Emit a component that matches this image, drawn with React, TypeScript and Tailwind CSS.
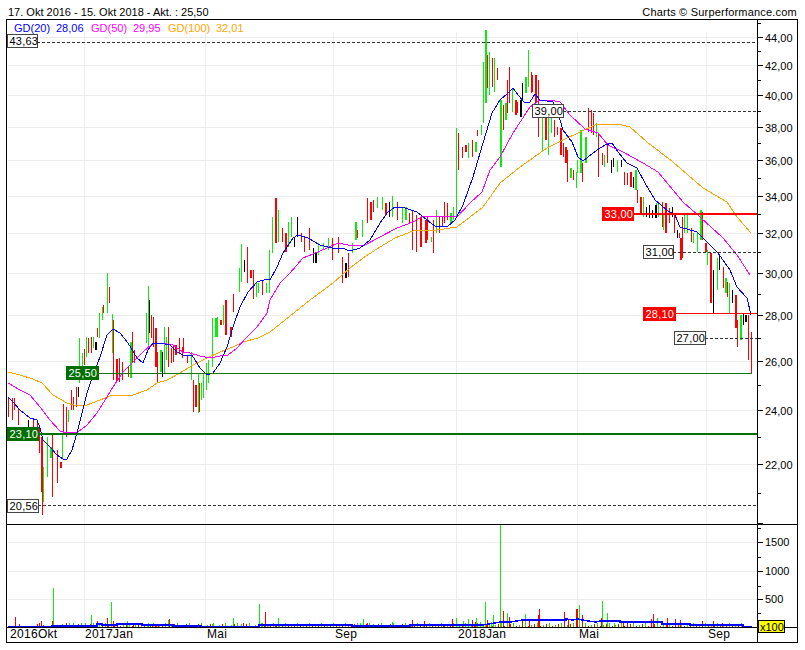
const G = [
	[43,467,502],[47,437,477],[50,447,458],[62,433,458],[68,410,422],[79,338,383],[82,353,367],[86,337,357],[93,337,348],[99,313,338],[102,307,320],[107,273,313],[112,314,353],[130,342,378],[146,313,343],[148,286,347],[160,350,372],[164,327,373],[166,337,360],[191,352,380],[198,373,413],[201,383,400],[203,373,398],[206,363,390],[208,360,383],[212,318,367],[215,318,337],[217,317,337],[223,305,325],[239,268,292],[241,244,282],[256,283,297],[258,283,293],[266,283,293],[269,250,293],
	[272,217,253],[278,210,242],[288,222,247],[291,217,237],[318,243,255],[323,243,250],[328,238,250],[352,243,253],[355,222,240],[362,220,237],[377,197,208],[382,197,210],[392,196,217],[402,208,223],[405,207,220],[431,237,242],[436,210,233],[450,213,223],[453,207,220],[456,128,217],[468,143,158],[475,142,152],[481,125,135],[483,62,123],[485,30,103],[489,52,95],[494,58,92],[500,100,167],[505,103,120],[512,88,112],[525,77,93],[528,50,87],
	[542,117,152],[548,117,155],[551,117,133],[570,168,178],[576,172,188],[577,160,173],[580,130,173],[585,137,163],[596,123,137],[604,155,167],[617,160,172],[635,170,190],[643,197,217],[656,203,213],[658,202,217],[663,213,230],[684,213,233],[687,213,233],[693,233,243],[697,233,252],[700,210,240],[707,250,265],[717,258,290],[725,278,293],[729,283,313],[740,315,340],
];
const R = [
	[8,397,417],[12,398,420],[14,398,410],[18,408,425],[33,420,432],[37,420,437],[39,427,453],[41,437,492],[42,437,515],[52,435,497],[57,450,483],[60,462,468],[63,404,433],[66,407,437],[71,390,410],[73,397,410],[76,387,407],[84,349,365],[88,338,353],[91,337,353],[97,328,337],[103,305,313],[109,287,303],[113,320,380],[116,359,382],[117,359,381],[119,358,382],[122,362,380],[128,366,377],[132,332,363],[134,350,363],[151,315,338],[153,317,347],[155,328,367],[157,352,382],[168,327,367],[171,348,363],[173,345,362],[175,345,355],[179,338,353],[182,347,358],[183,338,352],[187,355,363],[193,380,412],[195,385,407],[199,383,412],[220,320,325],[225,300,335],[230,327,337],[233,294,312],[247,247,283],[250,270,278],[253,270,299],[262,280,295],
	[275,198,243],[282,228,242],[285,233,252],[301,233,242],[304,237,252],[309,228,250],[332,238,260],[338,237,253],[342,257,283],[348,253,277],[357,230,238],[367,198,223],[370,202,220],[373,200,212],[385,203,215],[397,202,220],[409,213,223],[412,210,250],[416,215,252],[420,217,247],[425,220,243],[427,217,240],[433,220,253],[439,217,233],[442,217,227],[444,202,223],[447,203,220],[458,133,170],[462,147,158],[465,145,152],[472,140,157],[477,130,136],[487,55,88],[492,58,87],[497,68,80],[503,105,130],[507,80,113],[509,67,103],[515,100,115],[517,102,113],[532,75,92],[535,75,103],[538,80,137],
	[531,72,93],[545,117,140],[554,120,137],[557,127,135],[560,128,155],[563,143,157],[565,147,163],[567,150,182],[573,170,180],[582,163,182],[588,108,132],[591,110,133],[593,113,135],[598,133,177],[602,153,165],[607,143,163],[624,172,185],[627,173,185],[630,172,187],[637,190,203],[640,197,213],[662,202,227],[665,203,233],[669,208,223],[674,213,233],[679,233,238],[680,238,260],[682,217,258],[691,228,242],[702,212,240],[705,243,252],[710,253,303],[723,267,288],[727,282,297],[735,295,328],[737,320,347],[748,315,360],[751,332,373],
];
const K = [
	[28,420,427],[78,387,397],[95,342,350],[149,300,333],[162,352,377],[244,260,272],
	[294,237,247],[297,217,237],[313,248,263],[315,253,263],[345,263,278],[389,202,217],[520,100,117],[522,83,100],
	[611,160,173],[613,158,167],[621,160,167],[633,177,188],[646,207,217],[649,205,218],[652,210,218],[655,205,218],[672,207,217],[677,230,238],[713,270,313],[719,255,270],[732,290,303],[743,313,325],[745,315,322],
];

const BLUE = "8,397 13,402 20,410 30,418 37,420 40,428 43,440 50,447 57,455 63,459 67,459 72,450 77,433 82,413 87,393 93,375 100,357 107,335 113,329 120,333 128,343 137,358 143,363 148,350 153,343 160,343 170,345 177,352 183,355 192,355 200,368 207,375 213,373 220,363 227,347 233,327 240,307 248,292 257,282 267,279 270,280 277,267 283,253 293,238 298,235 308,238 320,245 332,248 342,248 350,251 360,248 370,240 380,223 388,212 395,207 405,208 417,212 427,220 435,226 447,227 455,220 463,205 473,177 483,143 492,113 500,100 508,93 513,88 518,95 525,103 530,102 535,94 540,100 553,102 558,113 563,130 572,142 578,157 583,161 588,157 597,150 605,145 612,143 618,152 627,163 637,168 645,183 655,200 668,211 675,215 680,227 697,232 707,242 718,253 730,270 737,287 747,298 751,315";
const MAGENTA = "8,383 20,390 30,395 40,407 50,420 60,431 67,433 78,432 87,425 97,413 107,397 113,387 123,372 133,362 143,352 152,344 160,343 173,345 183,352 190,353 200,356 210,358 220,356 228,355 237,348 247,337 257,327 267,313 270,300 280,283 290,273 303,258 313,254 327,248 338,243 353,246 365,245 380,237 397,228 413,222 423,216 440,216 457,217 470,203 482,192 490,170 500,157 513,133 530,107 540,100 550,100 560,102 570,115 585,129 598,133 608,145 623,152 643,163 658,172 673,190 683,202 700,217 723,238 737,255 750,275";
const ORANGE = "8,372 20,375 33,379 42,383 53,395 67,403 77,406 87,405 100,400 113,395 133,395 147,390 157,383 167,380 180,373 193,365 207,358 220,352 233,347 243,342 258,338 270,332 310,300 333,283 350,268 363,258 380,247 395,238 413,231 437,230 457,227 483,207 500,183 520,167 530,160 547,148 563,140 580,132 597,124 618,124 630,127 647,142 673,162 703,188 727,202 737,217 751,233";
const VOL_AVG = "8,627 52,627 52,626 97,626 97,624 102,624 102,625 117,625 117,624 142,624 142,625 173,625 173,626 201,626 201,627 259,627 259,625 352,625 352,626 410,626 410,625 483,625 500,622 510,622 523,620 566,620 566,619 573,620 577,619 588,621 596,622 600,621 620,621 620,622 662,622 662,624 690,624 690,625 743,625 743,627 752,627";

const VOL_G = [[53,588],[62,624],[73,623],[85,623],[91,615],[111,602],[127,621],[148,623],[168,620],[212,624],[233,618],[241,624],[259,604],[262,623],[268,624],[278,618],[360,623],[363,619],[373,624],[392,622],[456,618],[463,621],[468,619],[476,618],[480,622],[485,602],[491,622],[493,615],[500,525],[507,613],[525,614],[579,605],[602,601],[607,613],[614,623],[657,618]];
const VOL_R = [[15,617],[19,624],[37,624],[39,623],[41,621],[43,625],[52,621],[66,623],[97,621],[107,618],[113,621],[117,624],[133,623],[152,624],[155,624],[158,624],[169,619],[243,623],[265,612],[275,624],[282,624],[288,624],[294,624],[367,623],[412,620],[424,621],[443,624],[452,619],[472,620],[475,622],[487,620],[503,611],[509,617],[522,619],[529,620],[539,609],[538,615],[564,612],[568,620],[576,609],[577,609],[582,615],[601,618],[623,623],[627,623],[651,619],[653,614],[667,618],[675,619],[680,620],[702,621],[713,621],[722,623]];

const PRICE_TICKS = [45,44,43,42,41,40,39,38,37,36,35,34,33,32,31,30,29,28,27,26,25,24,23,22,21,20];
const priceY = (p: number) => Math.round(36.5 + 616.7 * Math.log(44 / p)) + 0.5;
const GRID_X = [84.5, 205.5, 333.5, 456.5, 577.5, 706.5];
const DATES: [number, string][] = [[10,"2016Okt"],[85,"2017Jan"],[207,"Mai"],[335,"Sep"],[458,"2018Jan"],[579,"Mai"],[708,"Sep"]];

function Bars({ data, color }: { data: number[][]; color: string }) {
	return (
		<>
			{data.map(([x, a, b], i) => (
				<rect key={i} x={x} y={a} width={x % 5 === 0 ? 2 : 1} height={b - a} fill={color} />
			))}
		</>
	);
}

function Tag({ x, y, w, text, fill }: { x: number; y: number; w: number; text: string; fill?: string }) {
	return (
		<g>
			<rect x={x + 0.5} y={y + 0.5} width={w} height={13} fill={fill ?? "#fff"} stroke={fill ?? "#444"} shapeRendering="crispEdges" />
			<text x={x + 2.5} y={y + 11} fontSize={11} letterSpacing={0.2} fill={fill ? "#fff" : "#000"}>
				{text}
			</text>
		</g>
	);
}

export default function App() {
	// small volume bars along the baseline
	const small: number[] = [];
	for (let x = 60; x < 745; x += 3) small.push(x);

	return (
		<div className="w-[805px] h-[650px] bg-white text-black text-[11px] [font-family:'Liberation_Sans',Arial,sans-serif]">
			<div className="flex justify-between h-[19px] pl-[8px] pr-[8px] pt-[6px] leading-[13px]">
				<span>17. Okt 2016 - 15. Okt 2018 - Akt. : 25,50</span>
				<span className="tracking-[0.2px]">Charts © Surperformance.com</span>
			</div>
			<div className="ml-[6px] w-[792px] h-[624px] border border-black flex flex-col">
				<svg width={790} height={504} viewBox="7 20 790 504" className="block">
					<g shapeRendering="crispEdges">
						{PRICE_TICKS.filter((p) => p % 2 === 0 && p > 20).map((p) => (
							<line key={p} x1={8} x2={757} y1={priceY(p)} y2={priceY(p)} stroke="#ececec" />
						))}
						{GRID_X.map((x) => (
							<line key={x} x1={x} x2={x} y1={32} y2={524} stroke="#ececec" />
						))}
						<Bars data={G} color="#0cec0c" />
						<Bars data={R} color="#ff0000" />
						<Bars data={K} color="#000" />
						<polyline points={ORANGE} fill="none" stroke="#ffa500" />
						<polyline points={MAGENTA} fill="none" stroke="#ff00ff" />
						<polyline points={BLUE} fill="none" stroke="#0000ff" />
						<line x1={37} x2={757} y1={42.5} y2={42.5} stroke="#333" strokeDasharray="3 2" />
						<line x1={38} x2={757} y1={505.5} y2={505.5} stroke="#333" strokeDasharray="3 2" />
						<line x1={563} x2={757} y1={111.5} y2={111.5} stroke="#333" strokeDasharray="3 2" />
						<line x1={673} x2={757} y1={252.5} y2={252.5} stroke="#333" strokeDasharray="3 2" />
						<line x1={705} x2={757} y1={338.5} y2={338.5} stroke="#333" strokeDasharray="3 2" />
						<line x1={98} x2={752} y1={373.5} y2={373.5} stroke="#117711" />
						<line x1={675} x2={757} y1={313.5} y2={313.5} stroke="#ff0000" />
						<rect x={38} y={433} width={719} height={2} fill="#007000" />
						<rect x={633} y={213} width={124} height={2} fill="#ff0000" />
						<line x1={757.5} x2={757.5} y1={20} y2={524} stroke="#000" />
						{PRICE_TICKS.map((p) => (
							<line key={p} x1={757} x2={p % 2 === 0 ? 763 : 761} y1={priceY(p)} y2={priceY(p)} stroke="#000" />
						))}
					</g>
					{PRICE_TICKS.filter((p) => p % 2 === 0 && p > 20).map((p) => (
						<text key={p} x={765} y={priceY(p) + 4} fontSize={11}>
							{p},00
						</text>
					))}
					<Tag x={7} y={34} w={30} text="43,63" />
					<Tag x={7} y={499} w={31} text="20,56" />
					<Tag x={532} y={104} w={31} text="39,00" />
					<Tag x={643} y={245} w={30} text="31,00" />
					<Tag x={674} y={331} w={31} text="27,00" />
					<Tag x={66} y={366} w={32} text="25,50" fill="#006f00" />
					<Tag x={7} y={427} w={31} text="23,10" fill="#006f00" />
					<Tag x={602} y={207} w={31} text="33,00" fill="#ff0000" />
					<Tag x={643} y={307} w={32} text="28,10" fill="#ff0000" />
					<g fontSize={11}>
						<text x={14} y={32} fill="#0000ff">GD(20)</text>
						<text x={56} y={32} fill="#0000ff">28,06</text>
						<text x={91} y={32} fill="#ff00ff">GD(50)</text>
						<text x={133} y={32} fill="#ff00ff">29,95</text>
						<text x={168} y={32} fill="#ffa500">GD(100)</text>
						<text x={216} y={32} fill="#ffa500">32,01</text>
					</g>
				</svg>
				<div className="h-px shrink-0 bg-black" />
				<svg width={790} height={117} viewBox="7 525 790 117" className="block">
					<g shapeRendering="crispEdges">
						{[542.5, 571.5, 599.5].map((y) => (
							<line key={y} x1={8} x2={757} y1={y} y2={y} stroke="#ececec" />
						))}
						{GRID_X.map((x) => (
							<line key={x} x1={x} x2={x} y1={525} y2={627} stroke="#ececec" />
						))}
						{small.map((x) => (
							<rect key={x} x={x} y={627 - (1 + ((x * 7) % 4))} width={1} height={1 + ((x * 7) % 4)} fill={x % 2 === 0 ? "#ff0000" : "#0cec0c"} />
						))}
						{VOL_G.map(([x, y]) => (
							<rect key={x} x={x} y={y} width={1} height={627 - y} fill="#0cec0c" />
						))}
						{VOL_R.map(([x, y]) => (
							<rect key={x} x={x} y={y} width={1} height={627 - y} fill="#ff0000" />
						))}
						<polyline points={VOL_AVG} fill="none" stroke="#0000ff" strokeWidth={1.5} />
						<line x1={7} x2={797} y1={627.5} y2={627.5} stroke="#000" />
						<line x1={757.5} x2={757.5} y1={525} y2={642} stroke="#000" />
						{[528, 542, 557, 571, 586, 599, 613].map((y, i) => (
							<line key={y} x1={757} x2={i % 2 === 1 ? 763 : 761} y1={y + 0.5} y2={y + 0.5} stroke="#000" />
						))}
					</g>
					<g fontSize={11}>
						<text x={765} y={546}>1500</text>
						<text x={765} y={575}>1000</text>
						<text x={765} y={603}>500</text>
					</g>
					<g fontSize={12}>
						{DATES.map(([x, t]) => (
							<text key={x} x={x} y={638} letterSpacing={0.3}>
								{t}
							</text>
						))}
					</g>
					<rect x={758.5} y={620.5} width={26} height={12} fill="#ffff00" stroke="#000" shapeRendering="crispEdges" />
					<text x={760} y={630.5} fontSize={11}>x100</text>
				</svg>
			</div>
		</div>
	);
}
